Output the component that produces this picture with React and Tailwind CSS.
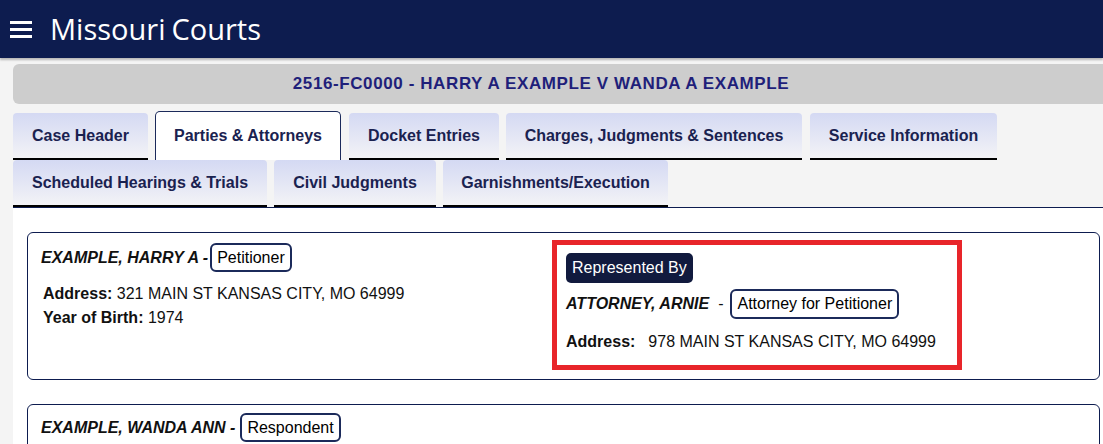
import React from "react";

const row1 = [
  { label: "Case Header", w: "w-[135px]", ml: "ml-0" },
  { label: "Parties & Attorneys", w: "w-[186px]", ml: "ml-[7px]", active: true },
  { label: "Docket Entries", w: "w-[150px]", ml: "ml-[8px]" },
  { label: "Charges, Judgments & Sentences", w: "w-[296px]", ml: "ml-[7px]" },
  { label: "Service Information", w: "w-[187px]", ml: "ml-[8px]" },
];

const row2 = [
  { label: "Scheduled Hearings & Trials", w: "w-[254px]", ml: "ml-0" },
  { label: "Civil Judgments", w: "w-[162px]", ml: "ml-[7px]" },
  { label: "Garnishments/Execution", w: "w-[225px]", ml: "ml-[7px]" },
];

function Tab({ tab }) {
  if (tab.active) {
    return (
      <div
        className={`${tab.w} ${tab.ml} h-[49px] flex items-center justify-center bg-white border border-b-0 border-[#1b2a5a] rounded-t-[5px] text-[16px] font-bold text-[#1a2250] whitespace-nowrap`}
      >
        {tab.label}
      </div>
    );
  }
  return (
    <div
      className={`${tab.w} ${tab.ml} h-[47px] flex items-center justify-center bg-gradient-to-b from-[#d4d9f3] to-[#f3f3f6] border-b-[2px] border-black rounded-t-[4px] text-[16px] font-bold text-[#1a2250] whitespace-nowrap`}
    >
      {tab.label}
    </div>
  );
}

function Pill({ children }) {
  return (
    <span className="inline-flex items-center h-[29px] px-[5px] border-[2px] border-[#1b2a5a] rounded-[6px] text-[16px] text-black">
      {children}
    </span>
  );
}

export default function App() {
  return (
    <div className="min-h-screen bg-[#f4f4f4] font-['Liberation_Sans',Arial,sans-serif] overflow-hidden">
      {/* Top bar */}
      <header className="h-[58px] bg-[#0d1c4f] flex items-center shadow-[0_2px_2px_rgba(0,0,0,0.25)]">
        <div className="ml-[10px] w-[22px] flex flex-col gap-[4px]">
          <span className="h-[3px] bg-white" />
          <span className="h-[3px] bg-white" />
          <span className="h-[3px] bg-white" />
        </div>
        <div className="ml-[18px] text-white text-[29px] leading-none font-['Open_Sans',sans-serif] -mt-[2px]">
          Missouri<span className="ml-[6px]">Courts</span>
        </div>
      </header>

      <div className="pl-[13px] pt-[6px]">
        {/* Case title */}
        <div className="h-[40px] rounded-l-[6px] bg-[#cdcdcd] flex items-center justify-center pr-[34px] text-[17px] tracking-[0.6px] font-bold text-[#1f1f7a]">
          2516-FC0000 - HARRY A EXAMPLE V WANDA A EXAMPLE
        </div>

        {/* Tabs */}
        <div className="mt-[7px] flex items-end">
          {row1.map((t) => (
            <Tab key={t.label} tab={t} />
          ))}
        </div>
        <div className="flex items-end border-b border-[#0d1c4f]">
          {row2.map((t) => (
            <Tab key={t.label} tab={t} />
          ))}
        </div>

        {/* Content */}
        <div className="bg-white pt-[24px] pl-[14px] pr-[3px] pb-[40px]">
          <div className="h-[148px] border border-[#0d1c4f] rounded-[6px] flex">
            <div className="w-[524px] pl-[13px] pt-[10px]">
              <div className="flex items-center">
                <span className="text-[16px] font-bold italic text-[#111] mr-[2px]">EXAMPLE, HARRY A -</span>
                <Pill>Petitioner</Pill>
              </div>
              <div className="mt-[10px] pl-[2px] text-[16px] leading-[24px] text-[#111]">
                <div>
                  <span className="font-bold">Address:</span> 321 MAIN ST KANSAS CITY, MO 64999
                </div>
                <div>
                  <span className="font-bold">Year of Birth:</span> 1974
                </div>
              </div>
            </div>
            <div className="mt-[7px] w-[410px] h-[130px] border-[5px] border-[#e8252a] pl-[9px] pt-[8px]">
              <span className="inline-flex items-center h-[30px] px-[6px] rounded-[5px] bg-[#111a3e] text-white text-[16px]">
                Represented By
              </span>
              <div className="mt-[6px] flex items-center">
                <span className="text-[16px] font-bold italic text-[#111]">ATTORNEY, ARNIE</span>
                <span className="text-[16px] text-[#111] ml-[9px] mr-[7px]">-</span>
                <span className="inline-flex items-center h-[30px] px-[5px] border-[2px] border-[#1b2a5a] rounded-[6px] text-[16px] text-black">
                  Attorney for Petitioner
                </span>
              </div>
              <div className="mt-[11px] text-[16px] text-[#111]">
                <span className="font-bold">Address:</span>
                <span className="ml-[13px]">978 MAIN ST KANSAS CITY, MO 64999</span>
              </div>
            </div>
          </div>

          <div className="mt-[24px] h-[80px] border border-[#0d1c4f] rounded-[6px] pl-[13px] pt-[8px]">
            <div className="flex items-center">
              <span className="text-[16px] font-bold italic text-[#111] mr-[5px]">EXAMPLE, WANDA ANN -</span>
              <Pill>Respondent</Pill>
            </div>
          </div>
        </div>
      </div>
    </div>
  );
}
